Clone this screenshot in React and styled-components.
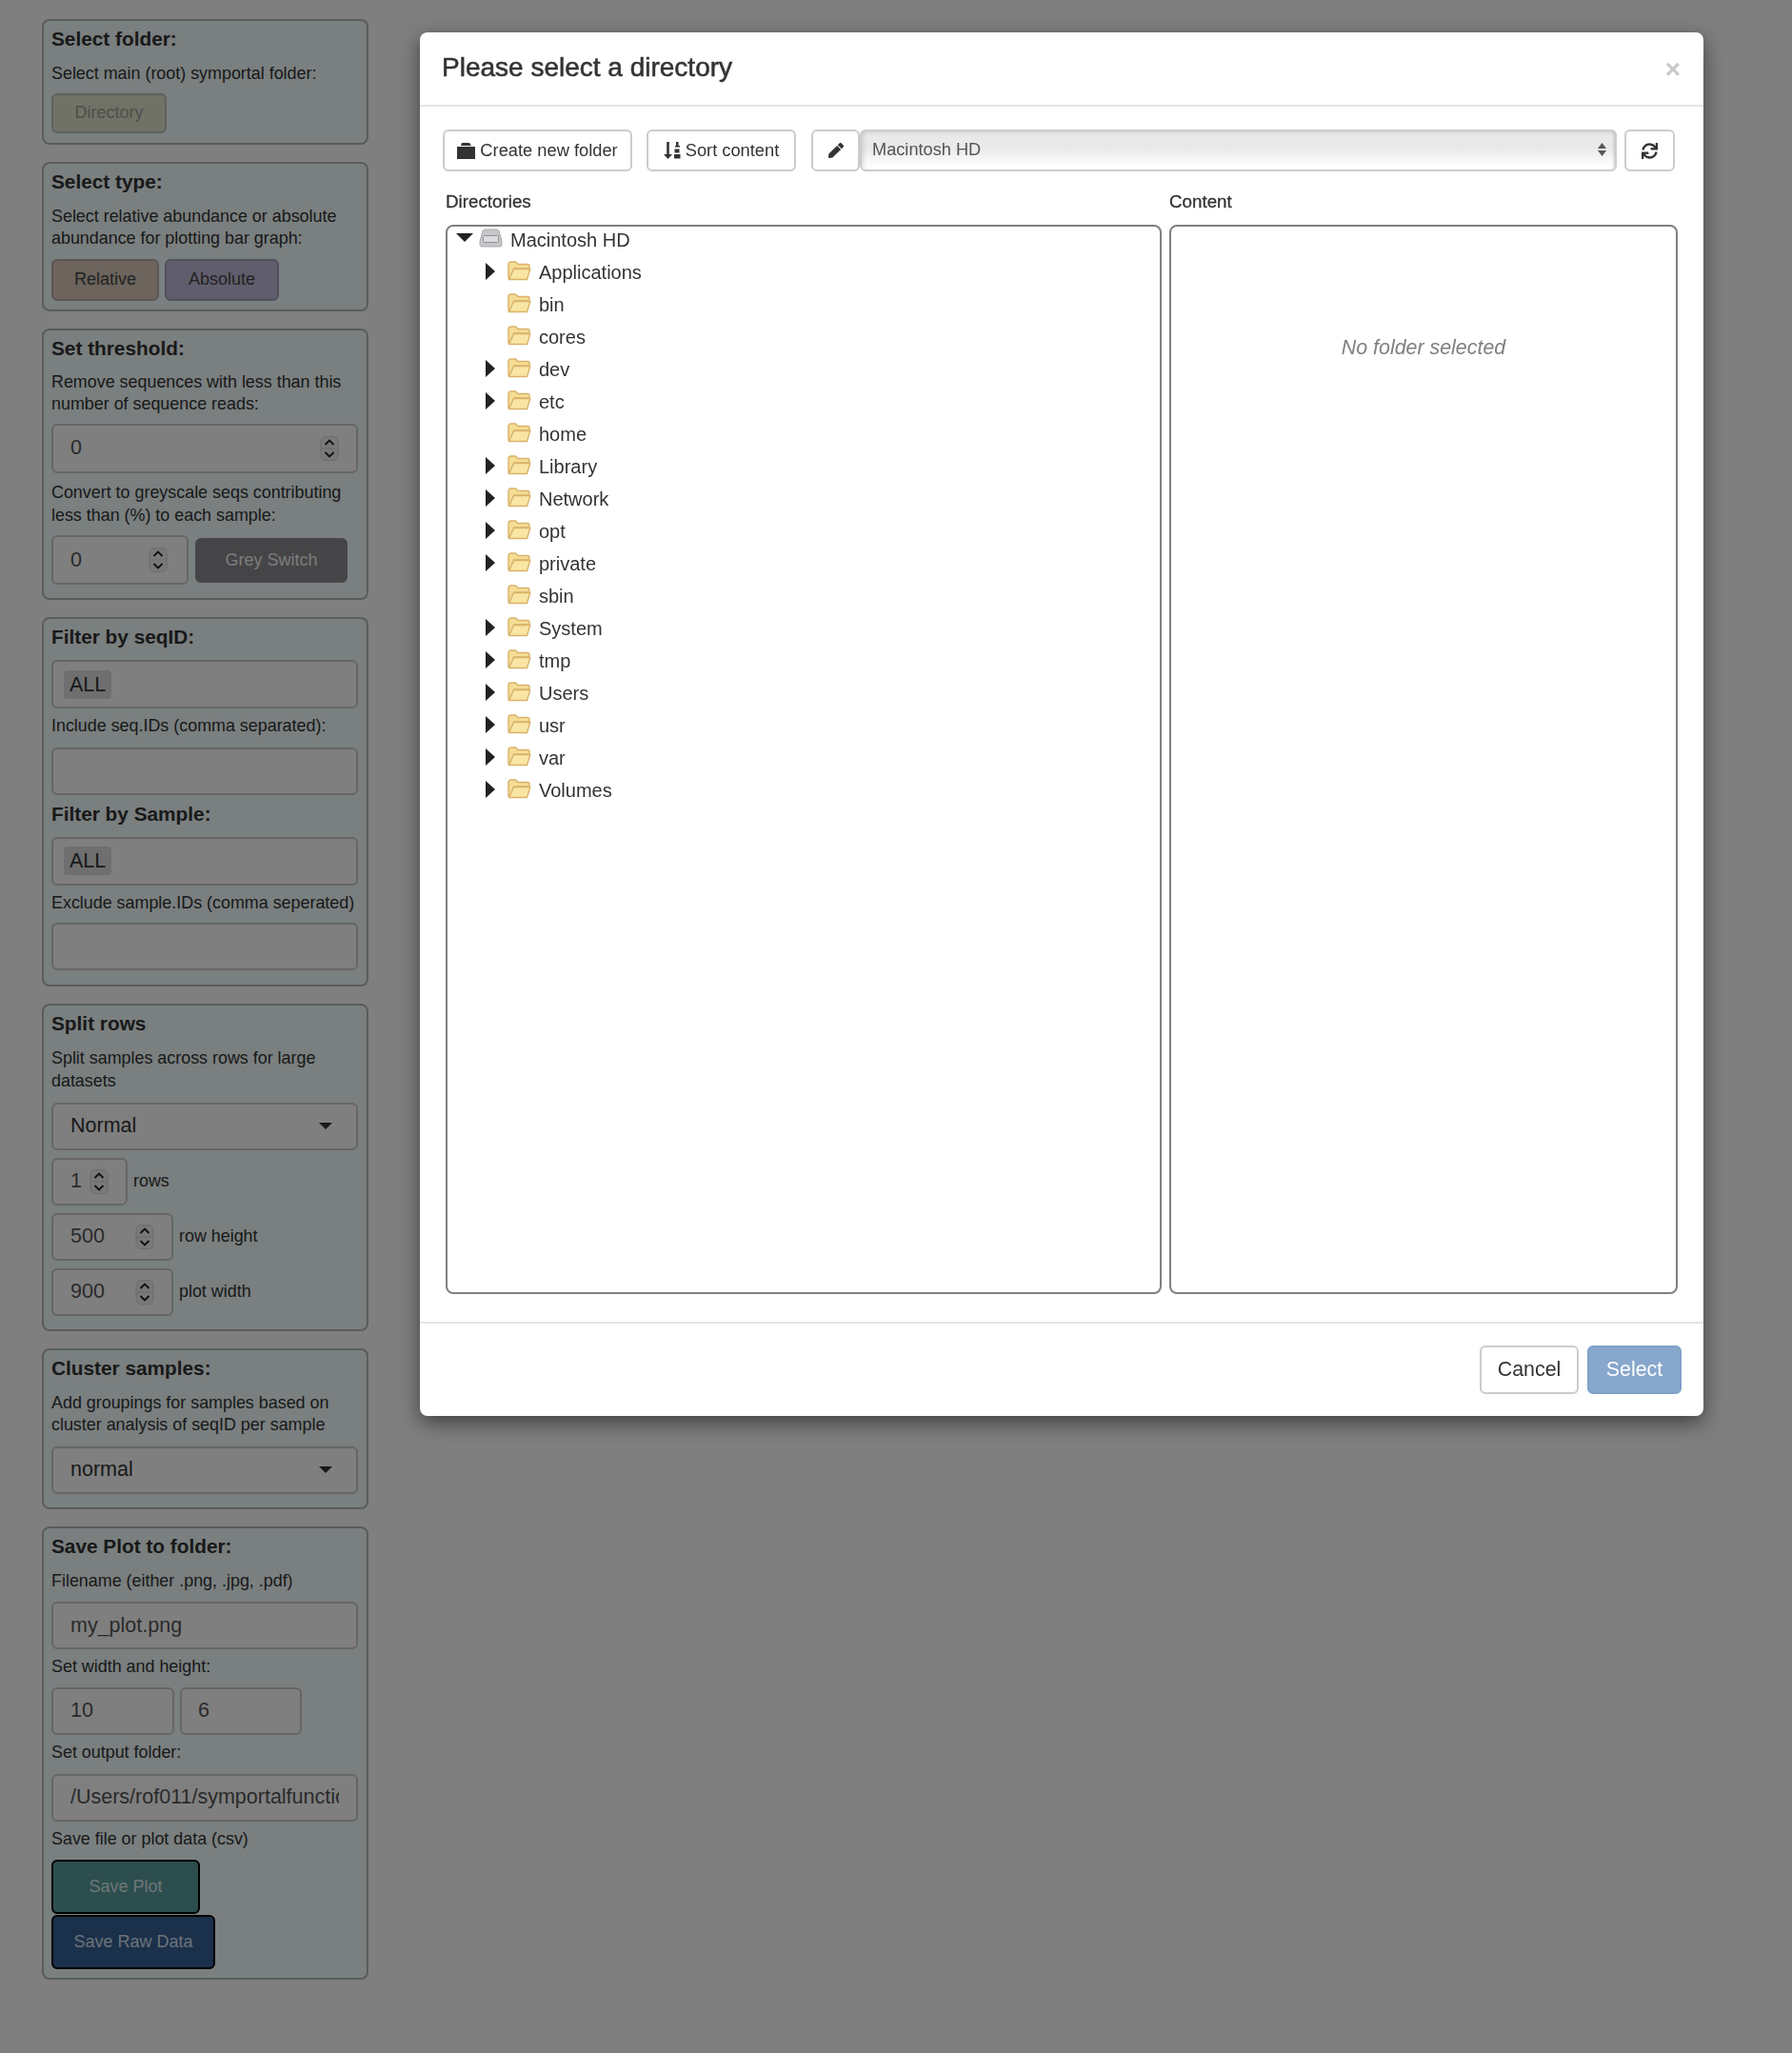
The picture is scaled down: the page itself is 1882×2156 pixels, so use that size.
import React from 'react';
import styled, { createGlobalStyle } from 'styled-components';
import { FaPen, FaSync } from 'react-icons/fa';

const GlobalStyle = createGlobalStyle`
  * { box-sizing: border-box; }
  html, body { margin: 0; padding: 0; background: #fff; }
  body {
    font-family: "Liberation Sans", Arial, sans-serif;
    color: #333;
    min-height: 2156px;
  }
`;

const Sidebar = styled.aside`
  width: 387px;
  padding: 20px 0 0 44px;
  display: flex;
  flex-direction: column;
  gap: 18px;
`;

const Panel = styled.section`
  width: 343px;
  padding: 5px 9px ${(p) => p.$pb || 9}px 8px;
  background: #f4ffff;
  border: 2px solid #b4b8b8;
  border-radius: 8px;
`;

const PanelTitle = styled.h3`
  margin: ${(p) => p.$mt || 0}px 0 0;
  font-size: 20.8px;
  line-height: 28px;
  font-weight: 700;
  color: #333;
`;

const Help = styled.p`
  margin: ${(p) => p.$mt ?? 11}px 0 0;
  font-size: 17.9px;
  line-height: 23.6px;
  color: #333;
`;

const Row = styled.div`
  display: flex;
  align-items: center;
  gap: ${(p) => p.$gap || 8}px;
  margin-top: ${(p) => p.$mt ?? 8}px;
`;

const Field = styled.input`
  display: block;
  width: ${(p) => p.$w || 322}px;
  height: ${(p) => p.$h || 50}px;
  margin-top: ${(p) => p.$mt ?? 0}px;
  padding: 0 ${(p) => p.$px ?? 18}px;
  background: #fff;
  border: 2px solid #ccc;
  border-radius: 6px;
  font: 21.5px "Liberation Sans", Arial, sans-serif;
  color: #555;
  outline: none;
`;

const NumberWrap = styled.div`
  position: relative;
  flex: none;
  width: ${(p) => p.$w || 322}px;
  margin-top: ${(p) => p.$mt ?? 0}px;
`;

const StepperIcon = styled.svg`
  position: absolute;
  top: 50%;
  right: ${(p) => p.$right}px;
  width: 20px;
  height: 27px;
  transform: translateY(-50%);
`;

const Stepper = ({ right }) => (
  <StepperIcon $right={right} viewBox="0 0 20 27" fill="none">
    <rect x="1" y="1" width="18" height="25" rx="5" fill="#f2f2f2" stroke="#d8d8d8" />
    <line x1="1" y1="13.5" x2="19" y2="13.5" stroke="#d8d8d8" />
    <path d="M5.5 9.5 10 5l4.5 4.5M5.5 17.5 10 22l4.500-4.500" stroke="#222" strokeWidth="1.9" />
  </StepperIcon>
);

const NumberField = ({ value, w, h = 50, right, mt }) => (
  <NumberWrap $w={w} $mt={mt}>
    <Field readOnly value={value} $w={w} $h={h} />
    <Stepper right={right} />
  </NumberWrap>
);

const TagBox = styled.div`
  display: flex;
  align-items: center;
  width: 322px;
  height: 51px;
  margin-top: 10px;
  padding-left: 11px;
  background: #fff;
  border: 2px solid #ccc;
  border-radius: 6px;
`;

const Tag = styled.span`
  padding: 0 6px;
  height: 30px;
  line-height: 30px;
  background: #dedede;
  border-radius: 4px;
  font-size: 21.5px;
  color: #333;
`;

const SelectBox = styled.div`
  display: flex;
  align-items: center;
  justify-content: space-between;
  width: 322px;
  height: 50px;
  margin-top: ${(p) => p.$mt ?? 10}px;
  padding: 0 25px 0 18px;
  background: #fff;
  border: 2px solid #ccc;
  border-radius: 6px;
  font-size: 21.5px;
  color: #333;
`;

const Caret = styled.span`
  width: 0;
  height: 0;
  border-left: 7px solid transparent;
  border-right: 7px solid transparent;
  border-top: 7px solid #333;
`;

const FieldNote = styled.span`
  margin-left: -2px;
  font-size: 17.9px;
  color: #333;
`;

const ColorButton = styled.button`
  display: block;
  flex: none;
  width: ${(p) => p.$w}px;
  height: ${(p) => p.$h || 44}px;
  margin-top: ${(p) => p.$mt ?? 0}px;
  padding: 0;
  background: ${(p) => p.$bg};
  border: 2px solid ${(p) => p.$border};
  border-radius: 6px;
  font: 18px "Liberation Sans", Arial, sans-serif;
  color: ${(p) => p.$color};
`;

const Backdrop = styled.div`
  position: fixed;
  inset: 0;
  background: rgba(0, 0, 0, 0.5);
`;

const Modal = styled.div`
  position: absolute;
  left: 441px;
  top: 34px;
  width: 1348px;
  height: 1453px;
  background: #fff;
  border-radius: 8px;
  box-shadow: 0 7px 21px rgba(0, 0, 0, 0.5);
  display: flex;
  flex-direction: column;
`;

const ModalHeader = styled.header`
  display: flex;
  align-items: center;
  justify-content: space-between;
  height: 78px;
  padding: 0 24px 0 23px;
  border-bottom: 2px solid #e5e5e5;
`;

const ModalTitle = styled.h4`
  margin: 0 0 3px;
  font-size: 28px;
  font-weight: 400;
  -webkit-text-stroke: 0.55px #333;
  color: #333;
`;

const CloseMark = styled.span`
  font-size: 28px;
  font-weight: 700;
  line-height: 1;
  color: #c9c9c9;
  margin-top: 2px;
`;

const ModalBody = styled.div`
  flex: 1;
  padding: 24px 26px 0 24px;
`;

const Toolbar = styled.div`
  display: flex;
  align-items: center;
  height: 44px;
  margin-right: 4px;
`;

const ToolButton = styled.button`
  display: flex;
  align-items: center;
  justify-content: center;
  gap: 5px;
  flex: none;
  width: ${(p) => p.$w}px;
  height: 44px;
  margin: 0 ${(p) => p.$mr || 0}px 0 ${(p) => p.$ml || 0}px;
  padding: 0;
  background: #fff;
  border: 2px solid #ccc;
  border-radius: 6px;
  font: 18.3px "Liberation Sans", Arial, sans-serif;
  color: #333;
`;

const PathSelect = styled.div`
  flex: 1;
  display: flex;
  align-items: center;
  justify-content: space-between;
  height: 44px;
  padding: 0 9px 2px 11px;
  background: linear-gradient(#dcdcdc 0, #e9e9e9 12%, #e9e9e9 45%, #fff 92%);
  border: 2px solid #ccc;
  border-radius: 6px;
  box-shadow: inset 4px 0 4px -2px rgba(0, 0, 0, 0.12), inset -3px 0 3px -2px rgba(0, 0, 0, 0.18);
  font-size: 18.2px;
  color: #555;
`;

const ColumnLabels = styled.div`
  display: flex;
  gap: 8px;
  margin: 20px 0 0 3px;
  height: 24px;
`;

const ColumnLabel = styled.label`
  width: ${(p) => p.$w}px;
  font-size: 18.8px;
  line-height: 24px;
  -webkit-text-stroke: 0.3px #333;
`;

const Columns = styled.div`
  display: flex;
  gap: 8px;
  margin: 12px 0 0 3px;
`;

const TreeBox = styled.div`
  width: 752px;
  height: 1123px;
  border: 2px solid #808080;
  border-radius: 8px;
`;

const ContentBox = styled.div`
  width: 534px;
  height: 1123px;
  padding-top: 113px;
  border: 2px solid #808080;
  border-radius: 8px;
  text-align: center;
  font-size: 21.4px;
  line-height: 28px;
  font-style: italic;
  color: #808080;
`;

const TreeRow = styled.div`
  display: flex;
  align-items: center;
  height: 34px;
  padding: 0 0 6px ${(p) => p.$indent}px;
  font-size: 20px;
  color: #333;
`;

const ArrowSlot = styled.span`
  display: flex;
  align-items: center;
  flex: none;
  width: ${(p) => p.$w || 24}px;
  margin-bottom: 2px;
`;

const ArrowRight = styled.span`
  width: 0;
  height: 0;
  border-top: 9px solid transparent;
  border-bottom: 9px solid transparent;
  border-left: 10px solid #222;
`;

const ArrowDown = styled.span`
  width: 0;
  height: 0;
  margin-bottom: 4px;
  border-left: 9px solid transparent;
  border-right: 9px solid transparent;
  border-top: 9px solid #222;
`;

const TreeIcon = styled.svg`
  flex: none;
  width: 25px;
  height: 21px;
  margin: 0 8px 4px 0;
`;

const FolderIcon = () => (
  <TreeIcon viewBox="0 0 25 21">
    <path d="M1 18V3.500C1 2 2 1 3.500 1h5L11 3.500h10c1.200 0 2 .8 2 2V8H7L3 18z" fill="#f5dd94" stroke="#d9b26a" strokeWidth="1.4" />
    <path d="M1.500 19.500 6.500 8.500h17.300L20.500 19.500z" fill="#f9e6a4" stroke="#d9b26a" strokeWidth="1.4" strokeLinejoin="round" />
  </TreeIcon>
);

const DriveIcon = () => (
  <TreeIcon viewBox="0 0 25 21">
    <path d="M4 2.500C4.500 1.400 5.200 1 6.500 1h12c1.300 0 2 .4 2.500 1.500L24 13v4c0 1.200-.8 2-2 2H3c-1.200 0-2-.8-2-2v-4z" fill="#c5c6c8" stroke="#a9abae" />
    <rect x="4.500" y="7.500" width="16" height="7" rx="1" fill="#dcdcde" stroke="#8f9194" />
  </TreeIcon>
);

const ToolIcon = styled.svg`
  flex: none;
  width: ${(p) => p.$w}px;
  height: 18px;
`;

const PenGlyph = styled(FaPen)`
  width: 16px;
  height: 16px;
  color: #333;
`;

const SyncGlyph = styled(FaSync)`
  width: 17px;
  height: 17px;
  color: #333;
`;

const ArrowPair = styled.svg`
  width: 9px;
  height: 18px;
`;

const ModalFooter = styled.footer`
  display: flex;
  justify-content: flex-end;
  gap: 9px;
  height: 99px;
  padding: 23px 23px 0 0;
  border-top: 2px solid #e5e5e5;
`;

const FooterButton = styled.button`
  width: ${(p) => p.$w}px;
  height: 51px;
  padding: 0;
  background: ${(p) => (p.$primary ? '#87a7cc' : '#fff')};
  border: 2px solid ${(p) => (p.$primary ? '#80a1c8' : '#ccc')};
  border-radius: 6px;
  font: 21.4px "Liberation Sans", Arial, sans-serif;
  color: ${(p) => (p.$primary ? '#fff' : '#333')};
`;

const folders = [
  ['Applications', true],
  ['bin', false],
  ['cores', false],
  ['dev', true],
  ['etc', true],
  ['home', false],
  ['Library', true],
  ['Network', true],
  ['opt', true],
  ['private', true],
  ['sbin', false],
  ['System', true],
  ['tmp', true],
  ['Users', true],
  ['usr', true],
  ['var', true],
  ['Volumes', true],
];

const App = () => {
  return (
    <>
      <GlobalStyle />
      <Sidebar>
        <Panel $pb={10}>
          <PanelTitle>Select folder:</PanelTitle>
          <Help>Select main (root) symportal folder:</Help>
          <ColorButton $w={121} $h={42} $mt={8} $bg="#e2e5cc" $border="#bcc0c0" $color="#9ca098">Directory</ColorButton>
        </Panel>

        <Panel>
          <PanelTitle>Select type:</PanelTitle>
          <Help>Select relative abundance or absolute abundance for plotting bar graph:</Help>
          <Row $mt={9} $gap={6}>
            <ColorButton $w={113} $bg="#d8c8ba" $border="#b4aaa4" $color="#444">Relative</ColorButton>
            <ColorButton $w={120} $bg="#c0bad8" $border="#a4a0bc" $color="#444">Absolute</ColorButton>
          </Row>
        </Panel>

        <Panel $pb={14}>
          <PanelTitle>Set threshold:</PanelTitle>
          <Help $mt={10}>Remove sequences with less than this number of sequence reads:</Help>
          <NumberField value="0" w={322} h={52} right={20} mt={8} />
          <Help $mt={9}>Convert to greyscale seqs contributing less than (%) to each sample:</Help>
          <Row $mt={9} $gap={7}>
            <NumberField value="0" w={144} h={52} right={22} />
            <ColorButton $w={160} $h={47} $bg="#8a8a8e" $border="#8e8e92" $color="#f6f6f6">Grey Switch</ColorButton>
          </Row>
        </Panel>

        <Panel $pb={15}>
          <PanelTitle>Filter by seqID:</PanelTitle>
          <TagBox><Tag>ALL</Tag></TagBox>
          <Help $mt={7}>Include seq.IDs (comma separated):</Help>
          <Field readOnly $mt={10} />
          <PanelTitle $mt={6}>Filter by Sample:</PanelTitle>
          <TagBox><Tag>ALL</Tag></TagBox>
          <Help $mt={7}>Exclude sample.IDs (comma seperated)</Help>
          <Field readOnly $mt={9} />
        </Panel>

        <Panel $pb={14}>
          <PanelTitle>Split rows</PanelTitle>
          <Help>Split samples across rows for large datasets</Help>
          <SelectBox>Normal<Caret /></SelectBox>
          <Row $mt={8}>
            <NumberField value="1" w={80} right={20} />
            <FieldNote>rows</FieldNote>
          </Row>
          <Row $mt={8}>
            <NumberField value="500" w={128} right={20} />
            <FieldNote>row height</FieldNote>
          </Row>
          <Row $mt={8}>
            <NumberField value="900" w={128} right={20} />
            <FieldNote>plot width</FieldNote>
          </Row>
        </Panel>

        <Panel $pb={14}>
          <PanelTitle>Cluster samples:</PanelTitle>
          <Help>Add groupings for samples based on cluster analysis of seqID per sample</Help>
          <SelectBox>normal<Caret /></SelectBox>
        </Panel>

        <Panel $pb={9}>
          <PanelTitle>Save Plot to folder:</PanelTitle>
          <Help>Filename (either .png, .jpg, .pdf)</Help>
          <Field readOnly value="my_plot.png" $mt={10} />
          <Help $mt={7}>Set width and height:</Help>
          <Row $mt={9} $gap={6}>
            <Field readOnly value="10" $w={129} />
            <Field readOnly value="6" $w={128} $px={17} />
          </Row>
          <Help $mt={7}>Set output folder:</Help>
          <Field readOnly value="/Users/rof011/symportalfunctions" $mt={10} />
          <Help $mt={7}>Save file or plot data (csv)</Help>
          <ColorButton $w={156} $h={57} $mt={10} $bg="#589c9c" $border="#000" $color="#dcecec">Save Plot</ColorButton>
          <ColorButton $w={172} $h={57} $mt={1} $bg="#366094" $border="#000" $color="#d8e4f0">Save Raw Data</ColorButton>
        </Panel>
      </Sidebar>

      <Backdrop />

      <Modal>
        <ModalHeader>
          <ModalTitle>Please select a directory</ModalTitle>
          <CloseMark>×</CloseMark>
        </ModalHeader>

        <ModalBody>
          <Toolbar>
            <ToolButton $w={199} $mr={15}>
              <ToolIcon $w={19} viewBox="0 0 19 18">
                <path d="M0 5h19v13H0zM4 4l1-3h8l2 3z" fill="#333" />
              </ToolIcon>
              Create new folder
            </ToolButton>
            <ToolButton $w={157} $mr={16}>
              <ToolIcon $w={18} viewBox="0 0 18 18">
                <path d="M3.200 0h2.600v13H9L4.500 18 0 13h3.200zM13 0h2.500v4H17v1.500h-5V4h1zM11.500 7.500h5v4h-5zM11 13h6.500v4.500H11z" fill="#333" />
              </ToolIcon>
              Sort content
            </ToolButton>
            <ToolButton $w={51}><PenGlyph /></ToolButton>
            <PathSelect>
              Macintosh HD
              <ArrowPair viewBox="0 0 9 18">
                <path d="M4.500 2 9 8H0zM0 10h9l-4.500 6z" fill="#555" />
              </ArrowPair>
            </PathSelect>
            <ToolButton $w={53} $ml={8}><SyncGlyph /></ToolButton>
          </Toolbar>

          <ColumnLabels>
            <ColumnLabel $w={752}>Directories</ColumnLabel>
            <ColumnLabel $w={534}>Content</ColumnLabel>
          </ColumnLabels>

          <Columns>
            <TreeBox>
              <TreeRow $indent={9}>
                <ArrowSlot><ArrowDown /></ArrowSlot>
                <DriveIcon />
                Macintosh HD
              </TreeRow>
              {folders.map(([name, expandable]) => (
                <TreeRow key={name} $indent={40}>
                  <ArrowSlot $w={23}>{expandable && <ArrowRight />}</ArrowSlot>
                  <FolderIcon />
                  {name}
                </TreeRow>
              ))}
            </TreeBox>
            <ContentBox>No folder selected</ContentBox>
          </Columns>
        </ModalBody>

        <ModalFooter>
          <FooterButton $w={104}>Cancel</FooterButton>
          <FooterButton $w={99} $primary>Select</FooterButton>
        </ModalFooter>
      </Modal>
    </>
  );
};

export default App;
